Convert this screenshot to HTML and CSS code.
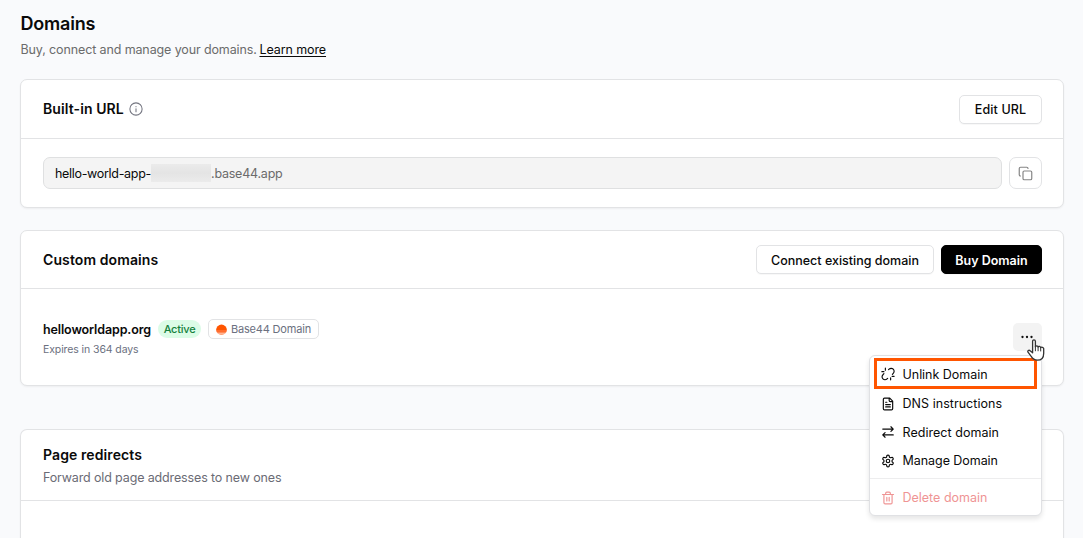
FILE: index.html
```
<!DOCTYPE html>
<html lang="en">
<head>
<meta charset="utf-8">
<title>Domains</title>
<link rel="stylesheet" href="styles.css">
</head>
<body>
<main class="page">
  <header class="page-header">
    <h1 class="page-title">Domains</h1>
    <p class="page-subtitle"><span class="subtitle-text">Buy, connect and manage your domains.</span><a class="learn-more">Learn more</a></p>
  </header>

  <section class="card card-url">
    <div class="card-header">
      <h2 class="card-title title-url">Built-in URL</h2>
      <svg class="info" viewBox="0 0 24 24"><circle cx="12" cy="12" r="10.500"/><path d="M12 16.500v-5M12 7.600v.500"/></svg>
      <button class="btn btn-edit">Edit URL</button>
    </div>
    <div class="url-row">
      <div class="url-field"><span class="url-name">hello-world-app-</span><span class="redacted"></span><span class="url-host">.base44.app</span></div>
      <button class="copy-btn"><svg class="copy-icon" viewBox="0 0 24 24"><rect x="8" y="8" width="14" height="14" rx="2"/><path d="M4 16c-1.100 0-2-.9-2-2V4c0-1.100.9-2 2-2h10c1.100 0 2 .9 2 2"/></svg></button>
    </div>
  </section>

  <section class="card card-domains">
    <div class="card-header header-domains">
      <h2 class="card-title">Custom domains</h2>
      <button class="btn btn-connect">Connect existing domain</button>
      <button class="btn btn-buy">Buy Domain</button>
    </div>
    <div class="domain-row">
      <div class="domain-info">
        <div class="domain-line">
          <span class="domain-name">helloworldapp.org</span>
          <span class="status">Active</span>
          <span class="tag"><svg class="tag-logo" viewBox="0 0 11 11"><path fill="#ff5500" d="M.1 6a5.400 5.400 0 1 1 10.800 0z"/><path fill="#ff6d2e" d="M.1 6h10.800a5 5 0 0 1-.5 1.900H.6A5 5 0 0 1 .1 6z"/><path fill="#ff8a58" d="M.6 7.900h9.800a5 5 0 0 1-1.300 1.600H1.900A5 5 0 0 1 .6 7.900z"/><path fill="#ffa47c" d="M1.900 9.500h7.200a5.500 5.500 0 0 1-7.200 0z"/></svg><span>Base44 Domain</span></span>
        </div>
        <p class="expires">Expires in 364 days</p>
      </div>
      <div class="actions">
        <button class="more-btn"><svg class="more-icon" viewBox="0 0 12 4"><circle cx="1.500" cy="2" r="1.150"/><circle cx="6" cy="2" r="1.150"/><circle cx="10.500" cy="2" r="1.150"/></svg></button>
        <div class="menu">
          <div class="menu-item item-unlink">
            <svg class="icon" viewBox="0 0 24 24"><path d="m19.500 12.500 1.500-1.700a5 5 0 0 0 0-7.100 5 5 0 0 0-7.100 0L13 4.600M5 11.500l-1.700 1.800a5 5 0 0 0 0 7.100 5 5 0 0 0 7.100 0l1-1M7.500 2v3.500M1.500 8H5M16.500 18.500V22M19 16h3.500"/></svg>
            <span class="label-unlink">Unlink Domain</span>
          </div>
          <div class="menu-item">
            <svg class="icon" viewBox="0 0 24 24"><path d="M15 2H6a2 2 0 0 0-2 2v16a2 2 0 0 0 2 2h12a2 2 0 0 0 2-2V7zM14 2v4a2 2 0 0 0 2 2h4M10 9H8M16 13H8M16 17H8"/></svg>
            <span class="label-dns">DNS instructions</span>
          </div>
          <div class="menu-item">
            <svg class="icon icon-redirect" viewBox="0 0 24 24"><path d="m17 3 4 4-4 4M21 7H3M7 13l-4 4 4 4M3 17h18"/></svg>
            <span class="label-redirect">Redirect domain</span>
          </div>
          <div class="menu-item item-manage">
            <svg class="icon" viewBox="0 0 24 24"><path d="M12.220 2h-.440a2 2 0 0 0-2 2v.180a2 2 0 0 1-1 1.730l-.430.250a2 2 0 0 1-2 0l-.150-.080a2 2 0 0 0-2.730.730l-.220.380a2 2 0 0 0 .730 2.730l.150.100a2 2 0 0 1 1 1.720v.510a2 2 0 0 1-1 1.740l-.150.090a2 2 0 0 0-.730 2.730l.220.380a2 2 0 0 0 2.730.730l.150-.080a2 2 0 0 1 2 0l.430.250a2 2 0 0 1 1 1.730V20a2 2 0 0 0 2 2h.440a2 2 0 0 0 2-2v-.180a2 2 0 0 1 1-1.730l.430-.250a2 2 0 0 1 2 0l.150.080a2 2 0 0 0 2.730-.730l.220-.390a2 2 0 0 0-.730-2.730l-.150-.080a2 2 0 0 1-1-1.740v-.500a2 2 0 0 1 1-1.740l.150-.090a2 2 0 0 0 .730-2.730l-.220-.380a2 2 0 0 0-2.730-.730l-.150.080a2 2 0 0 1-2 0l-.430-.250a2 2 0 0 1-1-1.730V4a2 2 0 0 0-2-2z"/><circle cx="12" cy="12" r="3"/></svg>
            <span class="label-manage">Manage Domain</span>
          </div>
          <div class="menu-divider"></div>
          <div class="menu-item item-delete">
            <svg class="icon" viewBox="0 0 24 24"><path d="M2.500 6h19M19 6v14c0 1-1 2-2 2H7c-1 0-2-1-2-2V6M8 6V4c0-1 1-2 2-2h4c1 0 2 1 2 2v2M10 11v6M14 11v6"/></svg>
            <span>Delete domain</span>
          </div>
        </div>
        <svg class="cursor" viewBox="0 0 18 22"><path fill="#fff" stroke="#333" stroke-width="1.300" stroke-linejoin="round" d="M5.600 13.800V2.300c0-2 2.700-2 2.800 0v5.500c.3-1.400 2.500-1.300 2.700.2.500-1.100 2.400-.8 2.600.7.700-.9 2.900-.5 3 .9v4.600c0 4.200-2.200 7-6.300 7-3.200 0-4.900-1.500-6.200-3.800L1 13.200c-.8-1.500.9-2.600 2.100-1.400z"/><path fill="none" stroke="#333" stroke-width="1" d="M8.400 7.500v4.300M11.100 8v3.800M13.700 8.700v3.300"/></svg>
      </div>
    </div>
  </section>

  <section class="card card-redirects">
    <div class="redirects-header">
      <h2 class="card-title title-redirects">Page redirects</h2>
      <p class="redirects-text">Forward old page addresses to new ones</p>
    </div>
  </section>
</main>
</body>
</html>
```
FILE: styles.css
```
* { box-sizing: border-box; }

body {
  margin: 0;
  height: 538px;
  overflow: hidden;
  background: #f9fafc;
  color: #0a0a0a;
  font: 12.5px/18px Inter, "Open Sans", sans-serif;
}

h1, h2, p { margin: 0; }

svg {
  display: block;
  flex: none;
  fill: none;
  stroke: currentColor;
  stroke-width: 2;
  stroke-linecap: round;
  stroke-linejoin: round;
}

.page { padding: 12px 19px 0 20px; }
.page-header { height: 67px; padding-left: 0.5px; }

.page-title {
  font-size: 18px;
  line-height: 24px;
  font-weight: 600;
  letter-spacing: -0.2px;
}

.page-subtitle {
  display: flex;
  margin-top: 5px;
  color: #6b6b6b;
}

.subtitle-text { width: 239px; letter-spacing: -0.12px; white-space: nowrap; }
.learn-more { color: #0a0a0a; text-decoration: underline; text-underline-offset: 2px; letter-spacing: -0.1px; }

.card {
  background: #fff;
  border: 1px solid #e2e3e5;
  border-radius: 7px;
  box-shadow: 0 1px 2px rgba(0, 0, 0, 0.05);
}

.card-url { height: 129px; }
.card-domains { height: 156px; margin-top: 22px; }
.card-redirects { height: 109px; margin-top: 43px; border-bottom: 0; border-radius: 7px 7px 0 0; }

.card-header {
  display: flex;
  align-items: center;
  height: 59px;
  padding: 0 21px 0 22px;
  border-bottom: 1px solid #e2e3e5;
}

.header-domains { height: 58px; }

.card-title {
  font-size: 14px;
  line-height: 20px;
  font-weight: 600;
  letter-spacing: 0.1px;
}

.info { width: 14px; height: 14px; margin-left: 5px; color: #737580; stroke-width: 1.8; }

.btn {
  height: 29px;
  padding: 1px 0 0;
  border: 1px solid #e2e3e5;
  border-radius: 5px;
  background: #fff;
  color: #0a0a0a;
  font: 500 12.5px/18px Inter, "Open Sans", sans-serif;
  white-space: nowrap;
  box-shadow: 0 1px 1px rgba(0, 0, 0, 0.03);
}

.btn-edit { width: 83px; margin-left: auto; letter-spacing: 0.13px; }
.btn-connect { width: 178px; margin-left: auto; padding-top: 2px; }
.btn-buy { width: 101px; margin-left: 7px; padding-top: 2px; background: #000; border-color: #000; color: #fff; font-weight: 600; }

.url-row {
  display: flex;
  gap: 7px;
  padding: 18px 21px 0 22px;
}

.url-field {
  display: flex;
  flex: 1;
  align-items: center;
  height: 32px;
  padding: 1px 11px 0;
  border: 1px solid #dfe0e1;
  border-radius: 7px;
  background: #f4f4f4;
}

.url-name { width: 96px; letter-spacing: -0.31px; white-space: nowrap; }
.redacted { width: 60px; height: 18px; margin-top: -1px; background: linear-gradient(#ebebeb, #e4e4e4 50%, #ebebeb); }
.url-host { color: #6b6b6b; letter-spacing: -0.22px; }

.copy-btn {
  display: grid;
  place-items: center;
  width: 33px;
  height: 32px;
  padding: 0;
  border: 1px solid #e2e3e5;
  border-radius: 7px;
  background: #fff;
  color: #858585;
}

.copy-icon { width: 15px; height: 15px; stroke-width: 1.9; }

.domain-row {
  display: flex;
  justify-content: space-between;
  padding: 30px 21px 0 22px;
}

.domain-line { display: flex; align-items: center; height: 20px; }
.domain-name { width: 115px; padding-top: 2px; font-weight: 600; letter-spacing: -0.12px; }

.status {
  width: 43px;
  height: 18px;
  border-radius: 9px;
  background: #dcfce7;
  color: #15803d;
  font-size: 11px;
  font-weight: 500;
  letter-spacing: -0.24px;
  text-align: center;
}

.tag {
  display: flex;
  align-items: center;
  gap: 4px;
  width: 111px;
  height: 20px;
  margin-left: 7px;
  padding-left: 7px;
  border: 1px solid #e2e3e5;
  border-radius: 5px;
  color: #6b7080;
  font-size: 11px;
  letter-spacing: -0.19px;
  white-space: nowrap;
}

.tag-logo { width: 11px; height: 11px; stroke: none; }

.expires {
  margin-top: 3px;
  color: #6b7080;
  font-size: 10.5px;
  line-height: 16px;
  letter-spacing: -0.1px;
}

.actions { position: relative; padding-top: 4px; }

.more-btn {
  display: grid;
  place-items: center;
  width: 29px;
  height: 28px;
  padding: 0 1px 0 0;
  border: 0;
  border-radius: 5px;
  background: #f3f3f3;
  color: #111;
}

.more-icon { width: 12px; height: 4px; fill: currentColor; stroke: none; }

.menu {
  position: absolute;
  top: 36px;
  right: 0;
  z-index: 1;
  width: 173px;
  height: 161px;
  padding: 2px 4px;
  border: 1px solid #e0e1e4;
  border-radius: 6px;
  background: #fff;
  box-shadow: 0 3px 5px rgba(0, 0, 0, 0.1);
}

.menu-item {
  display: flex;
  align-items: center;
  gap: 7.5px;
  height: 29px;
  padding-left: 7px;
  white-space: nowrap;
}

.item-unlink { width: 163px; height: 31px; padding-left: 4px; border: 3px solid #ff5500; }
.icon { width: 14px; height: 14px; }
.icon-redirect { margin-top: -1px; }
.label-unlink { padding-top: 2px; letter-spacing: -0.03px; }
.label-dns, .label-redirect { letter-spacing: 0.04px; }
.label-manage { letter-spacing: -0.05px; }
.item-manage { height: 27px; }
.menu-divider { height: 1px; margin: 4px -4px 4px; background: #ededee; }
.item-delete { color: #ef9494; }

.cursor {
  position: absolute;
  z-index: 2;
  top: 20px;
  left: 14px;
  width: 18px;
  height: 22px;
}

.redirects-header {
  height: 71px;
  padding: 15px 22px 0;
  border-bottom: 1px solid #e2e3e5;
}

.title-redirects { letter-spacing: 0.1px; }
.redirects-text { margin-top: 4px; color: #6b6b75; letter-spacing: -0.14px; }
```
